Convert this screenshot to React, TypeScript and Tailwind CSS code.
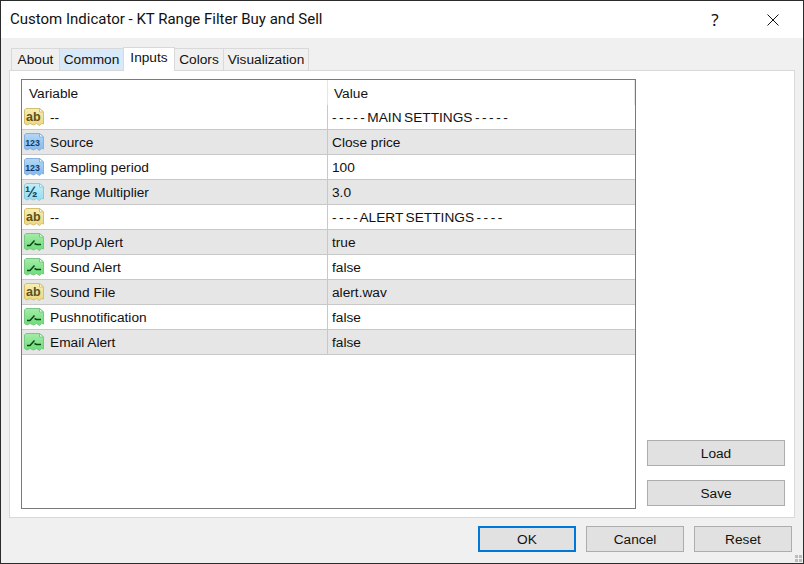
type IconKind = "ab" | "num" | "half" | "bool"

const rows: { icon: IconKind; name: string; value: string; banner?: boolean }[] = [
  { icon: "ab", name: "--", value: "- - - - - MAIN SETTINGS - - - - -", banner: true },
  { icon: "num", name: "Source", value: "Close price" },
  { icon: "num", name: "Sampling period", value: "100" },
  { icon: "half", name: "Range Multiplier", value: "3.0" },
  { icon: "ab", name: "--", value: "- - - - ALERT SETTINGS - - - -", banner: true },
  { icon: "bool", name: "PopUp Alert", value: "true" },
  { icon: "bool", name: "Sound Alert", value: "false" },
  { icon: "ab", name: "Sound File", value: "alert.wav" },
  { icon: "bool", name: "Pushnotification", value: "false" },
  { icon: "bool", name: "Email Alert", value: "false" },
]

const iconColors: Record<IconKind, { top: string; bottom: string; stroke: string }> = {
  ab: { top: "#f8eeb4", bottom: "#ecd77e", stroke: "#d2bf70" },
  num: { top: "#b4d8f6", bottom: "#84b8ea", stroke: "#86b2dc" },
  half: { top: "#c4eef8", bottom: "#94dcef", stroke: "#8cc8dc" },
  bool: { top: "#a4eca8", bottom: "#6cdc78", stroke: "#78c884" },
}

const TypeIcon: React.FC<{ kind: IconKind }> = ({ kind }) => {
  const c = iconColors[kind]
  return (
    <svg width="22" height="20" viewBox="0 0 22 20" className="shrink-0">
      <defs>
        <linearGradient id={`fill-${kind}`} x1="0" y1="0" x2="0" y2="1">
          <stop offset="0" stopColor={c.top} />
          <stop offset="1" stopColor={c.bottom} />
        </linearGradient>
      </defs>
      <path
        d="M3 1.5H16.5L20.5 5V17L18.5 16.5L16.5 18.5L13.5 16.5L10.5 18L7 16.5L4 18L1.5 16.5V3Z"
        fill={`url(#fill-${kind})`}
        stroke={c.stroke}
      />
      <path d="M16.5 1.5V5H20.5Z" fill="#ffffff" stroke={c.stroke} />
      {kind === "ab" && (
        <text x="3" y="14" fontSize="12.5" fontWeight="700" fill="#5a5220" fontFamily="Liberation Sans, sans-serif">ab</text>
      )}
      {kind === "num" && (
        <text x="2.2" y="13.5" fontSize="8.8" fontWeight="700" fill="#0e3c70" fontFamily="Liberation Sans, sans-serif">123</text>
      )}
      {kind === "half" && (
        <text x="2" y="14.5" fontSize="15" fontWeight="700" fill="#0e4c68" fontFamily="Liberation Sans, sans-serif">½</text>
      )}
      {kind === "bool" && (
        <path d="M4 13.5H7L11.5 8.5M11.5 11.5L13.5 12.5H18" fill="none" stroke="#0a4416" strokeWidth="1.5" />
      )}
    </svg>
  )
}

const Tab: React.FC<{ label: string; width: string; active?: boolean; hover?: boolean }> = ({ label, width, active, hover }) => (
  <div
    className={`${width} flex items-center justify-center border border-[#d9d9d9] border-b-0 -mr-px ${
      active
        ? "h-[24px] bg-white pb-[3px] relative z-10 mb-[-1px]"
        : hover
          ? "h-[22px] pt-[1px] bg-[#d8eaf9]"
          : "h-[22px] pt-[1px] bg-[#f0f0f0]"
    }`}
  >
    {label}
  </div>
)

const Button: React.FC<{ label: string; width: string; primary?: boolean }> = ({ label, width, primary }) => (
  <div
    className={`${width} h-[26px] pt-[2px] flex items-center justify-center bg-[#e1e1e1] ${
      primary ? "border-2 border-[#0078d7]" : "border border-[#adadad]"
    }`}
  >
    {label}
  </div>
)

export default function App() {
  return (
    <div className="w-[804px] h-[564px] relative flex flex-col bg-[#f0f0f0] border border-[#2b2b2b] text-[13.7px] text-[#111] font-['Liberation_Sans',Arial,sans-serif] overflow-hidden">
      <div className="h-[37px] shrink-0 bg-white flex items-center pl-[9px]">
        <span className="flex-1 font-['Roboto',sans-serif] text-[15px]">Custom Indicator - KT Range Filter Buy and Sell</span>
        <span className="text-[17px] w-[20px] text-center mr-[42px] font-['Noto_Sans',sans-serif]">?</span>
        <svg width="12" height="12" viewBox="0 0 12 12" className="mr-[24px]">
          <path d="M0.5 0.5L11.5 11.5M11.5 0.5L0.5 11.5" stroke="#111" strokeWidth="1" />
        </svg>
      </div>

      <div className="flex items-end pl-[10px] h-[32px] shrink-0">
        <Tab label="About" width="w-[49px]" />
        <Tab label="Common" width="w-[65px]" hover />
        <Tab label="Inputs" width="w-[52px]" active />
        <Tab label="Colors" width="w-[50px]" />
        <Tab label="Visualization" width="w-[86px]" />
      </div>

      <div className="mx-[8px] h-[448px] shrink-0 bg-white border border-[#d9d9d9] flex pt-[9px] pl-[11px] pr-[9px] pb-[7px]">
        <div className="w-[615px] h-[430px] -mt-px border border-[#7a7a7a] flex flex-col">
          <div className="h-[25px] shrink-0 flex items-center">
            <div className="w-[306px] pl-[7px] pt-[4px] border-r border-[#e5e5e5] h-full flex items-center">Variable</div>
            <div className="w-[307px] pl-[6px] pt-[4px] border-r border-[#e5e5e5] h-full flex items-center">Value</div>
          </div>
          {rows.map((row, i) => (
            <div key={i} className={`h-[25px] shrink-0 flex border-b border-[#c8c8c8] ${i % 2 === 1 ? "bg-[#e6e6e6]" : "bg-white"}`}>
              <div className="w-[306px] flex items-center pl-[1px] gap-[5px] border-r border-[#c8c8c8]">
                <TypeIcon kind={row.icon} />
                <span className="pt-[2px]">{row.name}</span>
              </div>
              <div className={`flex-1 pl-[4px] flex items-center ${row.banner ? "[word-spacing:-1.3px]" : ""}`}>
                <span className="pt-[2px]">{row.value}</span>
              </div>
            </div>
          ))}
        </div>
        <div className="flex-1 flex flex-col items-end justify-end gap-[14px] pb-[4px]">
          <Button label="Load" width="w-[138px]" />
          <Button label="Save" width="w-[138px]" />
        </div>
      </div>

      <div className="flex justify-end gap-[10px] pt-[8px] pr-[11px]">
        <Button label="OK" width="w-[98px]" primary />
        <Button label="Cancel" width="w-[98px]" />
        <Button label="Reset" width="w-[98px]" />
      </div>

      <div className="absolute right-[1px] bottom-[1px] grid grid-cols-2 gap-[1px]">
        <div className="w-[3px] h-[3px] bg-[#bcbcbc]" />
        <div className="w-[3px] h-[3px] bg-[#bcbcbc]" />
        <div className="w-[3px] h-[3px] bg-[#bcbcbc]" />
        <div className="w-[3px] h-[3px] bg-[#bcbcbc]" />
      </div>
    </div>
  )
}
